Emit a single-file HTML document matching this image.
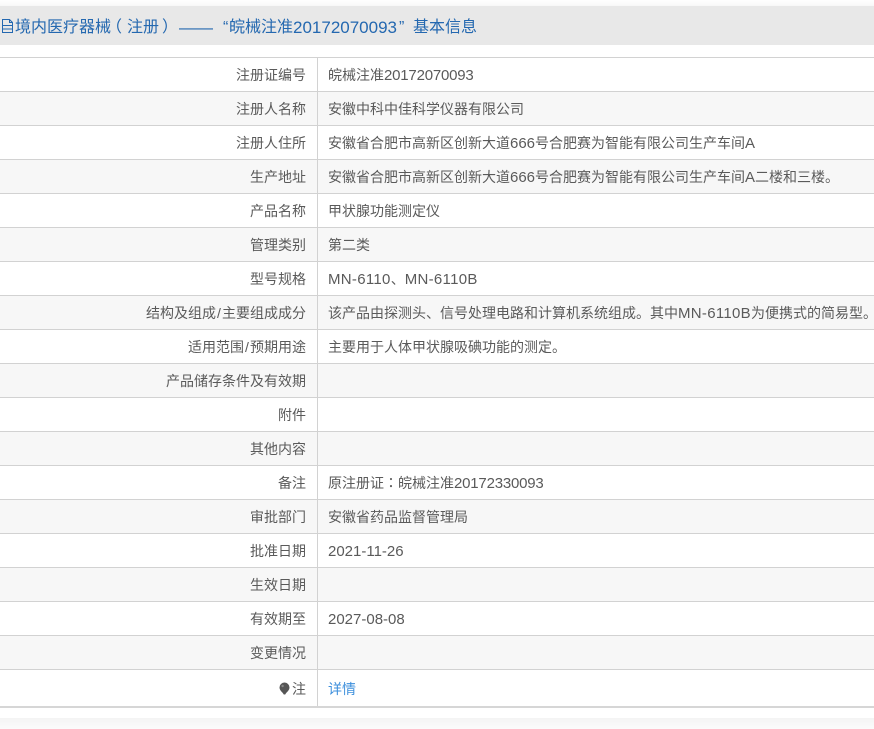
<!DOCTYPE html>
<html lang="zh-CN"><head><meta charset="utf-8"><title>基本信息</title>
<style>
html,body{margin:0;padding:0;background:#fff;width:874px;height:729px;overflow:hidden}
body{position:relative;font-family:"Liberation Sans","Noto Sans CJK SC",sans-serif;font-size:14px;color:#5a5a5a}
#top{position:absolute;left:0;top:0;width:874px;height:6px;background:linear-gradient(#fff,#f8f8f8)}
#head{position:absolute;left:0;top:6px;width:874px;height:39px;background:#e8e8e8;color:#2468b0;font-size:16px;line-height:39px;white-space:nowrap}
#head svg{position:absolute;left:1px;top:13px}
#head span{position:absolute;top:2px}
#tb{position:absolute;left:0;top:57px;width:874px;border-top:1px solid #d2d2d2;box-sizing:border-box}
.r{position:relative;height:34px;box-sizing:border-box;border-bottom:1px solid #d2d2d2;line-height:35px;white-space:nowrap;overflow:hidden}
.r:nth-child(even){background:#f7f7f7}
.l{position:absolute;right:568px;top:0}
.v{position:absolute;left:318px;top:0;bottom:0;right:0;padding-left:10px}
.n{font-size:15px;letter-spacing:-.2px}
.d{font-size:15px}
.m{font-size:15px;letter-spacing:.3px}
.s{display:inline-block;width:6px;text-align:center}
.t{font-family:"Noto Sans CJK TC",sans-serif}
#vl{position:absolute;left:317px;top:57px;width:1px;height:649px;background:#d2d2d2}
#bot{position:absolute;left:0;top:706px;width:874px;height:2px;background:#d6d6d6}
#foot{position:absolute;left:0;top:718px;width:874px;height:11px;background:linear-gradient(#f4f4f4,#fbfbfb)}
a{color:#3d8fdc;text-decoration:none}
.last{height:37px;border-bottom:0;line-height:38px}
</style></head><body>
<div id="top"></div>
<div id="head">
<svg width="13" height="15" viewBox="0 0 13 15" fill="none" stroke="#2468b0" stroke-width="1"><path d="M1.5 .5H8.5L11.5 3.5V13.5H1.5Z"/><path d="M8.5 .5V3.5H11.5M1.5 6.5H11.5M1.5 10H11.5"/></svg>
<span style="left:15px">境内医疗器械</span><span style="left:106px">（</span><span style="left:127px">注册</span><span style="left:162px">）</span><span style="left:179px;font-size:17px">——</span><span style="left:223px">“</span><span style="left:229px">皖械注准</span><span style="left:293px;font-size:17px">20172070093</span><span style="left:399px">”</span><span style="left:413px">基本信息</span></div>
<div id="tb">
<div class="r"><div class="l">注册证编号</div><div class="v">皖械注准<span class="n">20172070093</span></div></div>
<div class="r"><div class="l">注册人名称</div><div class="v">安徽中科中佳科学仪器有限公司</div></div>
<div class="r"><div class="l">注册人住所</div><div class="v">安徽省合肥市高新区创新大道<span class="d">666</span>号合肥赛为智能有限公司生产车间<span class="d">A</span></div></div>
<div class="r"><div class="l">生产地址</div><div class="v">安徽省合肥市高新区创新大道<span class="d">666</span>号合肥赛为智能有限公司生产车间<span class="d">A</span>二楼和三楼。</div></div>
<div class="r"><div class="l">产品名称</div><div class="v">甲状腺功能测定仪</div></div>
<div class="r"><div class="l">管理类别</div><div class="v">第二类</div></div>
<div class="r"><div class="l">型号规格</div><div class="v"><span class="m">MN-6110</span>、<span class="m">MN-6110B</span></div></div>
<div class="r"><div class="l">结构及组成<span class="s">/</span>主要组成成分</div><div class="v">该产品由探测头、信号处理电路和计算机系统组成。其中<span class="m">MN-6110B</span>为便携式的简易型。</div></div>
<div class="r"><div class="l">适用范围<span class="s">/</span>预期用途</div><div class="v">主要用于人体甲状腺吸碘功能的测定。</div></div>
<div class="r"><div class="l">产品储存条件及有效期</div><div class="v"></div></div>
<div class="r"><div class="l">附件</div><div class="v"></div></div>
<div class="r"><div class="l">其他内容</div><div class="v"></div></div>
<div class="r"><div class="l">备注</div><div class="v">原注册证<span class="t" lang="zh-TW">：</span>皖械注准<span class="n">20172330093</span></div></div>
<div class="r"><div class="l">审批部门</div><div class="v">安徽省药品监督管理局</div></div>
<div class="r"><div class="l">批准日期</div><div class="v"><span class="d">2021-11-26</span></div></div>
<div class="r"><div class="l">生效日期</div><div class="v"></div></div>
<div class="r"><div class="l">有效期至</div><div class="v"><span class="d">2027-08-08</span></div></div>
<div class="r"><div class="l">变更情况</div><div class="v"></div></div>
<div class="r last"><div class="l"><svg width="12" height="14" viewBox="0 0 12 14" style="vertical-align:-2px;margin-right:1px"><path d="M5.5 .5A5 5 0 0 1 10.5 5.5C10.5 8.5 7.5 10 6.2 12.5H4.8C3.5 10 .5 8.5 .5 5.5A5 5 0 0 1 5.5 .5Z" fill="#555"/><circle cx="3.6" cy="4" r="1.2" fill="#888"/></svg>注</div><div class="v"><a>详情</a></div></div>
</div>
<div id="vl"></div>
<div id="bot"></div>
<div id="foot"></div>
</body></html>
